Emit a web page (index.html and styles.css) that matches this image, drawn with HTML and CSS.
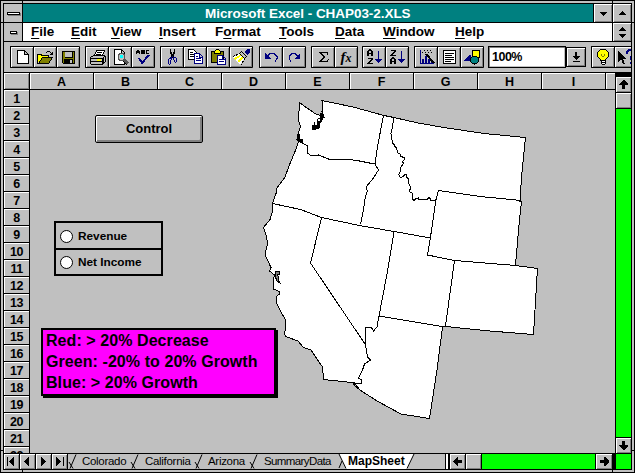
FILE: index.html
```html
<!DOCTYPE html>
<html lang="en">
<head>
<meta charset="utf-8">
<title>Microsoft Excel - CHAP03-2.XLS</title>
<link rel="stylesheet" href="styles.css">
</head>
<body>
<div class="window">
<svg class="frame-marks" width="635" height="473" viewBox="0 0 635 473"><path d="M22.5 0v3M612.5 0v3M22.5 470v3M612.5 470v3M0 22.5h3M632 22.5h3M0 450.5h3M632 450.5h3"/></svg>
<div class="inner">
  <div class="titlebar">
    <div class="sysbox"><i class="dash"></i></div>
    <div class="title"><span>Microsoft Excel - CHAP03-2.XLS</span></div>
    <div class="wbtn"><svg width="9" height="9"><path d="M1 3h7v1h-1v1h-1v1h-1v1h-1v-1h-1v-1h-1v-1h-1z"/></svg></div>
    <div class="wbtn"><svg width="9" height="9"><path d="M1 6h7v-1h-1v-1h-1v-1h-1v-1h-1v1h-1v1h-1v1h-1z"/></svg></div>
  </div>
  <div class="menubar">
    <div class="sysbox"><i class="dash small"></i></div>
    <nav class="menus">
      <span class="m-file"><u>F</u>ile</span><span class="m-edit"><u>E</u>dit</span><span class="m-view"><u>V</u>iew</span><span class="m-insert"><u>I</u>nsert</span><span class="m-format">F<u>o</u>rmat</span><span class="m-tools"><u>T</u>ools</span><span class="m-data"><u>D</u>ata</span><span class="m-window"><u>W</u>indow</span><span class="m-help"><u>H</u>elp</span>
    </nav>
    <div class="wbtn"><svg width="9" height="13"><path d="M1 5h7v-1h-1v-1h-1v-1h-1v-1h-1v1h-1v1h-1v1h-1zM1 8h7v1h-1v1h-1v1h-1v1h-1v-1h-1v-1h-1v-1h-1z"/></svg></div>
  </div>
  <div class="toolbar">
    <div class="group">
      <b class="tool"><svg width="19" height="18"><path class="w k" d="M4.5 2.500h7l4 4v9.000h-11zM11.500 2.500v4h4"/></svg></b>
      <b class="tool"><svg width="19" height="18"><path fill="#ff0" d="M2 6h5v1h6v3H6l-4 5z"/><path class="k" d="M1.500 15.500v-9h4v1h7v2"/><path class="k" fill="#808000" d="M2.500 15.500l4-6h10l-4 6z"/><path class="k" d="M10 4.500h1M11 3.500h3M14 4.500h1M15 5.500h1M14 6.500h3M16.500 4v3"/></svg></b>
      <b class="tool"><svg width="19" height="18"><path fill="#808000" class="k" d="M3.500 3.500h12v12h-11l-1-1z"/><path fill="#c0c0c0" d="M6 4h7v6H6z"/><path d="M5 4h1v6h8V4h-1v5H6V4zM5 11h9v5H5z"/><path fill="#c0c0c0" d="M11 12h2v3h-2z"/></svg></b>
    </div>
    <div class="group">
      <b class="tool"><svg width="19" height="18"><path class="w k" d="M6.500 7.500l2-5h8l-2 5zM9 4.500h5M8 6.500h5"/><path class="k" fill="#c0c0c0" d="M2.500 9.500l3-2h10l2 1v5l-3 3h-11l-1-1zM3 10.500h11l3-2M3 13.500h11M14.500 10v6M15.500 9v6"/><path fill="#ff0" d="M9 11h4v2H9z"/></svg></b>
      <b class="tool"><svg width="19" height="18"><path class="w k" d="M3.500 1.500h7l3 3v12h-10zM10.500 2v3h3"/><circle cx="10.500" cy="9" r="3.500" fill="#c0c0c0" stroke="#555"/><path fill="#0ff" d="M9 7h3v3H9z"/><path stroke="#555" stroke-width="3" d="M13 12l4 4"/><path class="k" d="M12 13l4 4"/></svg></b>
      <b class="tool"><svg width="19" height="18"><path class="k" d="M2.500 6V3.500h1v-1h1v1h1V6M3 4.500h2M7.500 6V2M8 2.500h2v1h-2M8 4.500h2v1h-2M15 2.500h-2.500v3H15"/><path fill="none" stroke="#000080" stroke-width="2" d="M5 10l3 5 7-8"/></svg></b>
    </div>
    <div class="group">
      <b class="tool"><svg width="19" height="18"><path class="k" stroke-width="1.500" d="M7.500 1v3l3 6M11.500 1v3l-3 6"/><path class="n" d="M9 9l-3 2-1 4 1 1h1l1-4zM10 9l3 1 1 3-1 1h-1l-2-4z"/></svg></b>
      <b class="tool"><svg width="19" height="18"><path class="w k" d="M2.500 1.500h5l3 3v7h-8zM4 4.500h3M4 6.500h4M4 8.500h4"/><path class="w n" d="M8.500 5.500h5l3 3v7h-8zM13.500 6v3h3M10 8.500h2M10 10.500h5M10 12.500h5"/></svg></b>
      <b class="tool"><svg width="19" height="18"><path class="k" fill="#808000" d="M2.500 3.500h12v11h-12z"/><path class="k" fill="#ff0" d="M5.500 5.500v-2l2-2h2l2 2v2z"/><path class="w n" d="M8.500 7.500h5l3 3v6h-8zM13.500 8v3h3M10 11.500h3M10 13.500h5"/></svg></b>
      <b class="tool"><svg width="19" height="18"><path class="w" d="M1 9l7-4 5 5-5 7-3-3z"/><path fill="#ff0" d="M2 10l6-3 1 1-6 4zM5 13l5-4 1 1-4 5z"/><path class="k" stroke-dasharray="2 1" d="M1 8.500l7-3 5 5-4 6"/><path class="k" fill="#c0c0c0" d="M7.500 5.500l2-2 5 5-2 2z"/><path fill="#000080" d="M12 4l3-3h3v3l-3 3z"/></svg></b>
    </div>
    <div class="group">
      <b class="tool"><svg width="19" height="18"><path class="n" d="M5 8.500l3-3h4l3 3v2l-2 3"/><path fill="#000080" d="M3 5v6h6z"/></svg></b>
      <b class="tool"><svg width="19" height="18"><path class="n" d="M13 8.500l-3-3H7l-3 3v2l2 3"/><path fill="#000080" d="M15 5v6H9z"/></svg></b>
    </div>
    <div class="group">
      <b class="tool"><svg width="19" height="18"><path d="M5 4h9v3h-1V5H7.500l3.500 4-4 4h6l1-2h1l-1 3H5v-1l4-4-4-4z"/></svg></b>
      <b class="tool"><em class="fx">f<small>x</small></em></b>
    </div>
    <div class="group">
      <b class="tool"><svg width="19" height="18"><path class="k" stroke-width="1.500" d="M3 8V4l1.500-2h1L7 4v4M3 5.500h4M2.500 10.500h5l-4.500 5h5"/><path fill="#000080" d="M13 3h1v8h3l-3.500 4L10 11h3z"/></svg></b>
      <b class="tool"><svg width="19" height="18"><path class="k" stroke-width="1.500" d="M2.500 2.500h5l-4.500 5h5M3 16v-4l1.500-2h1L7 12v4M3 13.500h4"/><path fill="#000080" d="M13 3h1v8h3l-3.500 4L10 11h3z"/></svg></b>
    </div>
    <div class="group">
      <b class="tool"><svg width="19" height="18"><path class="n" d="M3.500 2v13.500H17"/><path fill="#000080" d="M5 11h2v4H5zM8 8h2v7H8zM11 11h2v4h-2zM14 13h2v2h-2z"/><path class="k" stroke-width="2" d="M9 6l8 9"/><path class="k" stroke-dasharray="1 2" d="M5 4.500h10M7 2.500h9"/></svg></b>
      <b class="tool"><svg width="19" height="18"><path class="w k" d="M3.500 2.500h12v13h-12zM5 5.500h9M5 7.500h7M5 9.500h9M5 11.500h9M5 13.500h6"/></svg></b>
      <b class="tool"><svg width="19" height="18"><path fill="#000080" d="M1 13l6-7 4 7z"/><path class="k" fill="#ff0" d="M9.500 2.500h7v7h-7z"/><circle class="k" cx="11.500" cy="12" r="4" fill="#008080"/></svg></b>
    </div>
    <div class="zoom">100%</div>
    <div class="drop"><svg width="9" height="11"><path d="M3 0h2v4h3L4.500 7.500 0 4h3zM1 9h7v1H1z"/></svg></div>
    <div class="group help">
      <b class="tool"><svg width="19" height="18"><path class="k" fill="#ff0" d="M6.500 1.500h5l3 3v4l-3 3v1h-5v-1l-3-3v-4z"/><path class="k" fill="#fff" d="M7.500 12.500h4v3l-1 1h-2l-1-1zM8 14.500h3"/><path stroke="#808000" fill="none" d="M7 6l1 2h2l1-2"/></svg></b>
      <b class="tool"><svg width="19" height="18"><path d="M1 3v11l3-3 2 5h2l-2-5h3z"/><path class="n" stroke-width="2" d="M10 6V4l2-2h3l2 2v2l-3 3v3M13 15h2"/></svg></b>
    </div>
  </div>
  <div class="work">
    <div class="grid">
      <div class="colheads"><div class="corner"></div><div>A</div><div>B</div><div>C</div><div>D</div><div>E</div><div>F</div><div>G</div><div>H</div><div>I</div><div class="part"></div></div>
      <div class="rows">
        <div class="rowheads"><div>1</div><div>2</div><div>3</div><div>4</div><div>5</div><div>6</div><div>7</div><div>8</div><div>9</div><div>10</div><div>11</div><div>12</div><div>13</div><div>14</div><div>15</div><div>16</div><div>17</div><div>18</div><div>19</div><div>20</div><div>21</div><div>22</div></div>
        <div class="sheet">
          <svg class="map" width="584" height="363" viewBox="30 90 584 363">
            <path class="land" d="M299.5 102.500L307 108l8 5.500 5 2 1.500 3 2.500-1-2-6 1-4-1-7L353 107l31 8.500 10 2L418 123l26 4.500 40 6 41.500 4L521.500 177l-1.500 24h1.500L518.500 230 515.500 265.500 537.500 268.500 533.500 334.500 490 331 445.500 326.500 442.500 327 437 370 429.500 418.500 401 414 377 401l-17-11-6-8L352 382.500 323.500 379.500 322.500 367 315 356 311 350 303.500 347.500 298 341 285.500 336.500 284.500 334 286 325 285 319 281 312 276 302V297L279.500 294V291.500L273.500 289V279.500L274.500 275 269.500 271 271 267.500 265 255 267.500 243.500 266.500 236.500 263.500 227.500 270 219.500 272.500 211.500V203.500L276 193.500 277 188 285 177 290 163.500 295 151.500 298.500 141.500 297.500 140 298.500 132 300.500 127 298.500 120z"/>
            <path d="M298.500 141l4 2 5 3v7l4 3 7-1 10 4h18l13 2 15 3M383.500 115.500l-6 31-2.500 17.500 3.500 6-5 8-7.500 9 1.500 4-2 5-2 14-3 14.500M272.500 203.500l28 6 21 8 38 8 46 8 25 4.500M394 117.500l-1.500 9-1.500 7 1.500 10 2 1v2l2 1 1 5 3 2v2l4 1v2l-2 2 1 2-3 4v4l-2 3 2 3 3-1 1-2h2v3l2 1v4l2 5-1 4 3 2v6l2 1 1-2h2l1-1v2h9l1-2 2 1v2L436 200 438.500 190.500 480 196.500 521.500 200.500M436 199.500L430.500 237 427.500 255 454.500 260.500 515.500 265.500M454.500 260.500L445.500 326M379 316l33 5.500 30 5h4M394 232l-7 42-8 42-2 11-3.500 4-2.500-4-5 .5-.5 17.500 2 12 3 3-6 4-2 6-4 8 3 2v3h-9M321.500 218l-11 45 54.500 81M353 383l2 3 4 3"/>
            <path class="ink" d="M320 113l2 1v6l-2 3-1 5-3 1h-4v-3l2-1v-3h3l1-3 2-1zM298 134h1v5h3v2h-4v-2h-1z"/>
            <path class="bay" d="M276 271h3v3h-2l1 2v3l2 4-3-2-2-5z"/>
            <path class="clear" d="M315 122h2v3h-2zM318 119h2v2h-2z"/>
          </svg>
          <div class="control">Control</div>
          <div class="options">
            <label><i></i>Revenue</label>
            <label><i></i>Net Income</label>
          </div>
          <div class="legend"><p>Red: &gt; 20% Decrease</p><p>Green: -20% to 20% Growth</p><p>Blue: &gt; 20% Growth</p></div>
        </div>
      </div>
    </div>
    <div class="vscroll">
      <div class="cap"></div>
      <div class="sb"><svg width="9" height="9"><path d="M4 0h1l4 4v1H6v4H3V5H0V4z"/></svg></div>
      <div class="sb"></div>
      <div class="track"></div>
      <div class="sb last"><svg width="9" height="9"><path d="M4 9h1l4-4V4H6V0H3v4H0v1z"/></svg></div>
    </div>
  </div>
  <div class="tabbar">
    <div class="nav"><svg width="9" height="9"><path d="M0 0h1v9H0zM7 0v9L2 5V4z"/></svg></div>
    <div class="nav"><svg width="9" height="9"><path d="M6 0v9L1 5V4z"/></svg></div>
    <div class="nav"><svg width="9" height="9"><path d="M2 0v9l5-4V4z"/></svg></div>
    <div class="nav"><svg width="9" height="9"><path d="M8 0h1v9H8zM1 0v9l5-4V4z"/></svg></div>
    <div class="tabs">
      <svg class="tabshape" width="377" height="15" viewBox="68 454 377 15">
        <path fill="#fff" d="M339 454h75l-7 15h-61z"/>
        <path d="M70 468.500l6-14M69 462l4 6.500M132 468.500l6-14M131 462l4 6.500M196 468.500l6-14M195 462l4 6.500M251 468.500l6-14M250 462l4 6.500M339 454l7 14.500M339 468l3-7M414 454l-7 14.500"/>
      </svg>
      <span class="t1">Colorado</span><span class="t2">California</span><span class="t3">Arizona</span><span class="t4">SummaryData</span><span class="t5">MapSheet</span>
    </div>
    <div class="split"></div>
    <div class="sb"><svg width="9" height="9"><path d="M0 4v1l4 4h1V6h4V3H5V0H4z"/></svg></div>
    <div class="sb"></div>
    <div class="track"></div>
    <div class="sb end"><svg width="9" height="9"><path d="M9 4v1L5 9H4V6H0V3h4V0h1z"/></svg></div>
    <div class="cap"></div>
    <div class="green"></div>
  </div>
</div>
</div>
</body>
</html>
```

FILE: styles.css
```css
* { box-sizing: border-box; }
body { margin: 0; width: 635px; height: 473px; overflow: hidden; font-family: "Liberation Sans", Arial, sans-serif; color: #000; }
svg { display: block; flex: none; shape-rendering: crispEdges; }
.window { position: relative; width: 635px; height: 473px; border: 1px solid #000; padding: 2px; background: #c0c0c0; }
.frame-marks { position: absolute; left: -1px; top: -1px; fill: none; stroke: #000; }
.inner { position: relative; width: 629px; height: 467px; border: 1px solid #000; background: #c0c0c0; overflow: hidden; }
.titlebar, .menubar { display: flex; height: 19px; border-bottom: 1px solid #000; }
.sysbox { width: 19px; border-right: 1px solid #000; background: #c0c0c0; display: flex; align-items: center; justify-content: center; }
.dash { width: 13px; height: 3px; border: 1px solid #000; background: #fff; box-shadow: 1px 1px #808080; }
.dash.small { width: 7px; }
.title { flex: 1; background: #008080; color: #fff; font-weight: bold; font-size: 13.5px; line-height: 19px; padding-left: 182px; white-space: nowrap; letter-spacing: -.05px; }
.wbtn { width: 19px; border-left: 1px solid #000; background: #c0c0c0; box-shadow: inset 1px 1px #fff, inset -1px -1px #808080; display: flex; align-items: center; justify-content: center; }
.menubar { background: #fff; font-weight: bold; font-size: 13.5px; }
.menus { flex: 1; display: flex; padding-left: 8px; line-height: 17px; }
.menus u { text-underline-offset: 2px; text-decoration-thickness: 1px; }
.m-file, .m-edit { width: 40px; }
.m-view { width: 48px; }
.m-insert, .m-tools { width: 56px; }
.m-format { width: 64px; }
.m-data { width: 48px; }
.m-window { width: 72px; }
.toolbar { display: flex; height: 31px; padding: 4px 0 4px 6px; border-bottom: 1px solid #000; overflow: hidden; }
.group { display: flex; flex: none; height: 22px; border: 1px solid #000; border-right: 0; margin-right: 5px; border-radius: 1px; }
.group:nth-child(3) { margin-right: 6px; }
.group:nth-child(5), .group:nth-child(7) { margin-right: 4px; }
.tool { width: 23px; height: 20px; border-right: 1px solid #000; box-shadow: inset 1px 1px #fff, inset -1px -1px #808080; display: flex; align-items: center; justify-content: center; overflow: hidden; }
.k { stroke: #000; fill: none; }
.k[fill="#ff0"] { fill: #ff0; }
.k[fill="#fff"], .w { fill: #fff; }
.k[fill="#808000"] { fill: #808000; }
.k[fill="#c0c0c0"] { fill: #c0c0c0; }
.k[fill="#008080"] { fill: #008080; }
.n { stroke: #000080; fill: none; }
.w.k, .w.n { fill: #fff; }
.fx { font: italic bold 15px/18px "Liberation Serif", serif; }
.fx small { font-size: 12px; }
.zoom { flex: none; width: 78px; height: 22px; background: #fff; border: 1px solid #000; box-shadow: inset 1px 1px #808080, inset -1px -1px #c0c0c0; font-weight: bold; font-size: 12.5px; line-height: 20px; padding-left: 3px; letter-spacing: -.5px; }
.drop { width: 20px; height: 20px; margin: 1px 5px 0 0; border: 1px solid #000; box-shadow: inset 1px 1px #fff, inset -1px -1px #808080; display: flex; align-items: center; justify-content: center; flex: none; }
.work { display: flex; height: 381px; border-bottom: 1px solid #000; }
.grid { width: 611px; overflow: hidden; }
.colheads { display: flex; height: 17px; border-bottom: 1px solid #000; }
.colheads div { flex: none; width: 64px; border-right: 1px solid #000; box-shadow: inset 1px 1px #fff; text-align: center; font-weight: bold; font-size: 12.5px; line-height: 18px; }
.colheads .corner { width: 26px; box-shadow: inset 1px 1px #fff, inset -1px -1px #808080; }
.colheads .part { width: 9px; border-right: 0; }
.rows { display: flex; height: 363px; overflow: hidden; }
.rowheads { width: 26px; flex: none; border-right: 1px solid #000; }
.rowheads div { height: 17px; border-bottom: 1px solid #000; box-shadow: inset 1px 1px #fff; text-align: center; font-weight: bold; font-size: 12.5px; line-height: 18px; letter-spacing: -.5px; }
.sheet { position: relative; width: 584px; height: 363px; }
.map { position: absolute; left: 0; top: 0; }
.map path { fill: none; stroke: #000; stroke-width: 1; }
.map .land { fill: #fff; }
.map .ink { fill: #000; }
.map .bay { fill: #808080; }
.map .clear { fill: #fff; stroke: none; }
.control { position: absolute; left: 65px; top: 25px; width: 108px; height: 28px; border: 1px solid #000; border-radius: 2px; box-shadow: inset 1px 1px #fff, inset -2px -2px #808080; text-align: center; font-weight: bold; font-size: 13px; line-height: 25px; }
.options { position: absolute; left: 24px; top: 131px; width: 109px; height: 55px; border: 2px solid #000; display: flex; flex-direction: column; }
.options label { display: flex; align-items: center; height: 27px; font-weight: bold; font-size: 11.8px; padding-left: 4px; }
.options label:first-child { height: 25px; padding-top: 2px; }
.options label + label { border-top: 2px solid #000; padding-top: 1px; }
.options i { width: 13px; height: 13px; border: 1px solid #000; border-radius: 50%; background: #fff; margin-right: 5px; }
.legend { position: absolute; left: 11px; top: 238px; width: 235px; height: 68px; border: 2px solid #000; background: #f0f; box-shadow: 2px 2px #000; padding: 0 0 0 3px; font-weight: bold; font-size: 16px; line-height: 21px; white-space: nowrap; letter-spacing: .07px; }
.legend p { margin: 0; }
.vscroll { width: 16px; border-left: 1px solid #000; display: flex; flex-direction: column; }
.vscroll .cap { height: 4px; background: #000; }
.sb { flex: none; display: flex; align-items: center; justify-content: center; background: #c0c0c0; box-shadow: inset 1px 1px #fff, inset -1px -1px #808080; }
.vscroll .sb { height: 16px; border-bottom: 1px solid #000; }
.track { flex: 1; background: #0f0; }
.vscroll .last { border-bottom: 0; border-top: 1px solid #000; }
.tabbar { display: flex; height: 16px; border-bottom: 1px solid #000; margin-bottom: -1px; }
.nav { width: 16px; flex: none; border-right: 1px solid #000; box-shadow: inset 1px 1px #fff, inset -1px -1px #808080; display: flex; align-items: center; justify-content: center; }
.tabs { position: relative; width: 377px; flex: none; display: flex; font-size: 11.5px; line-height: 15px; padding-left: 14px; letter-spacing: -.3px; white-space: nowrap; }
.tabs span { position: relative; flex: none; }
.tabshape { position: absolute; left: 0; top: 0; shape-rendering: auto; stroke: none; }
.tabshape path:last-child { stroke: #000; fill: none; }
.t1 { width: 63px; }
.t2 { width: 63px; }
.t3 { width: 56px; }
.tabs .t4 { width: 84px; letter-spacing: -.6px; }
.tabs .t5 { font-weight: bold; font-size: 12px; letter-spacing: 0; }
.split { width: 5px; flex: none; background: #fff; border-left: 1px solid #000; border-right: 2px solid #000; }
.tabbar .sb { width: 16px; border-right: 1px solid #000; }
.tabbar .end { border-left: 1px solid #000; border-right: 0; width: 17px; }
.tabbar .cap { width: 4px; background: #000; }
.green { width: 15px; background: #0f0; }
```
